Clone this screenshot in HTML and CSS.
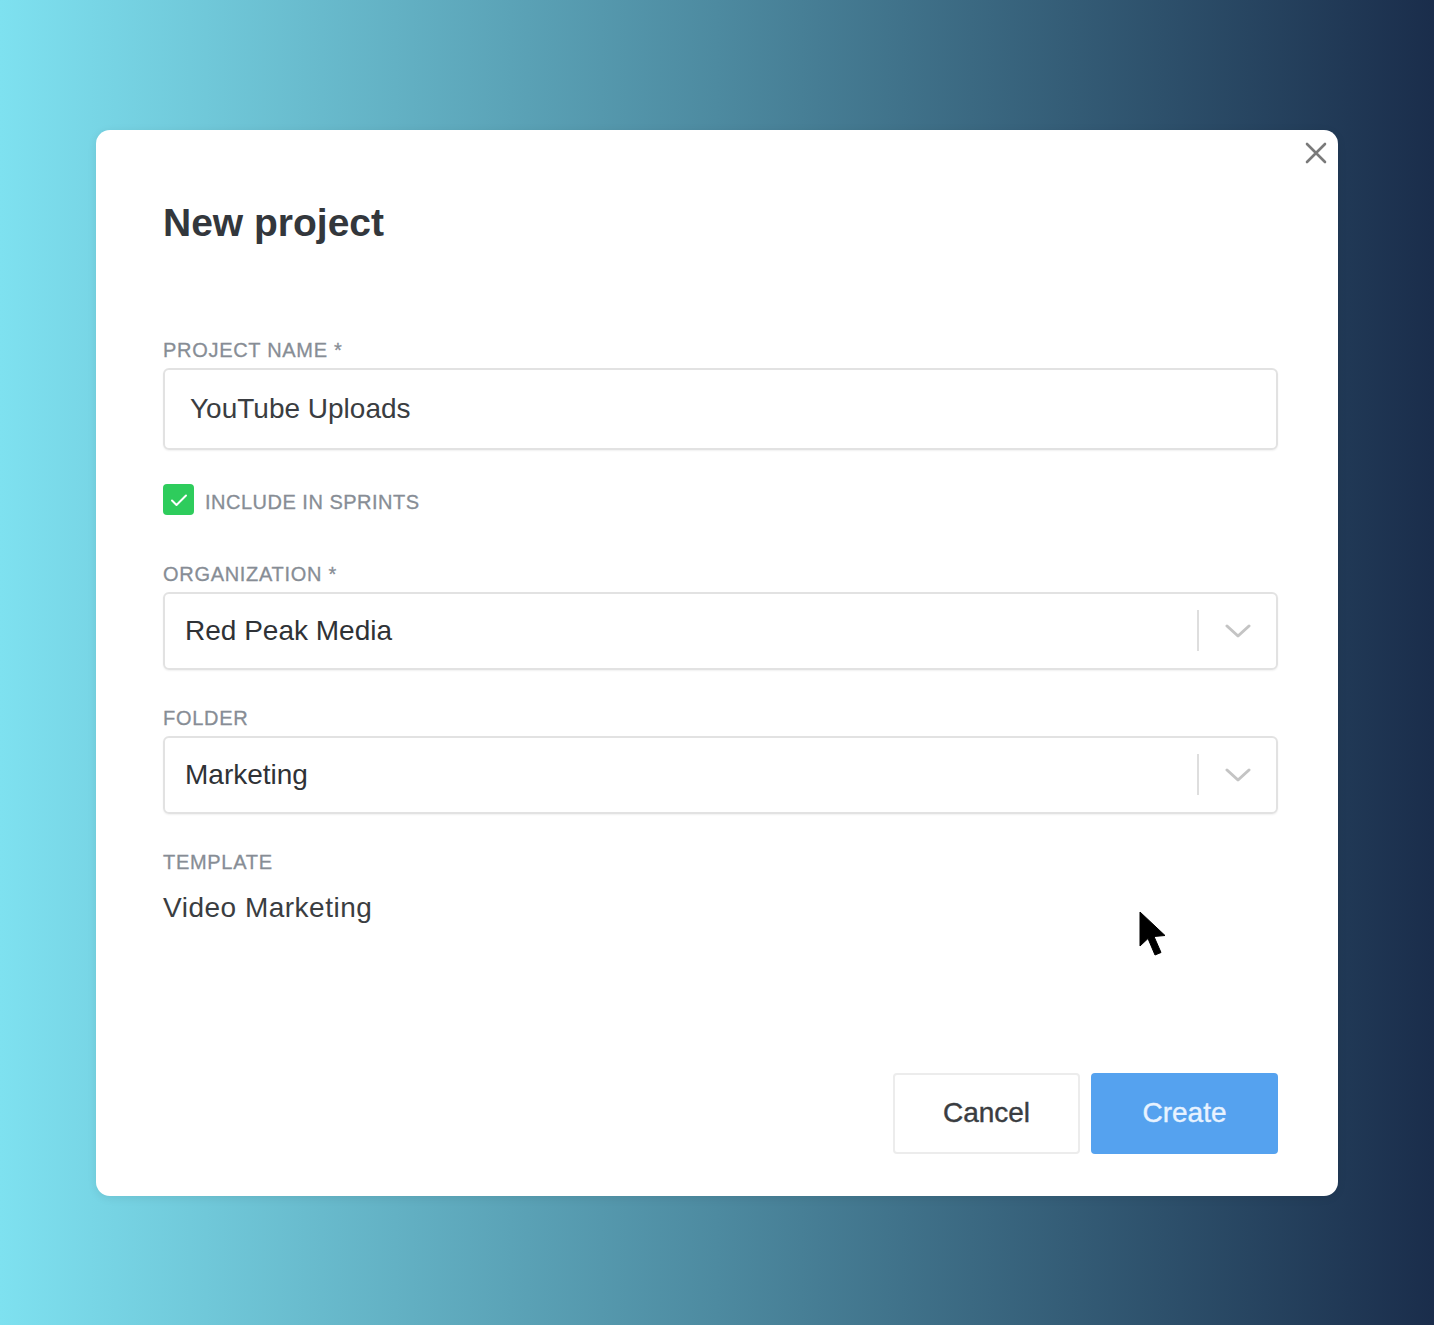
FILE: index.html
```html
<!DOCTYPE html>
<html lang="en">
<head>
<meta charset="utf-8">
<title>New project</title>
<link rel="stylesheet" href="styles.css">
</head>
<body>
<div class="modal">
  <button class="close" aria-label="Close">
    <svg width="22" height="22" viewBox="0 0 22 22"><path d="M2 2 L20 20 M20 2 L2 20" stroke="#7a7a7a" stroke-width="2.6" stroke-linecap="round" fill="none"/></svg>
  </button>
  <h1 class="title">New project</h1>

  <label class="label first">PROJECT NAME *</label>
  <div class="input">YouTube Uploads</div>

  <div class="check-row">
    <span class="checkbox">
      <svg width="18" height="14" viewBox="0 0 18 14"><path d="M2 7.5 L6.5 12 L16 2.5" stroke="#fff" stroke-width="2" fill="none" stroke-linecap="round" stroke-linejoin="round"/></svg>
    </span>
    <span class="check-label">INCLUDE IN SPRINTS</span>
  </div>

  <label class="label org">ORGANIZATION *</label>
  <div class="select">
    <span class="select-value">Red Peak Media</span>
    <span class="sep"></span>
    <svg class="chev" width="26" height="14" viewBox="0 0 26 14"><path d="M2 2 L13 12 L24 2" stroke="#c4c4c4" stroke-width="3" fill="none" stroke-linecap="round" stroke-linejoin="round"/></svg>
  </div>

  <label class="label">FOLDER</label>
  <div class="select">
    <span class="select-value">Marketing</span>
    <span class="sep"></span>
    <svg class="chev" width="26" height="14" viewBox="0 0 26 14"><path d="M2 2 L13 12 L24 2" stroke="#c4c4c4" stroke-width="3" fill="none" stroke-linecap="round" stroke-linejoin="round"/></svg>
  </div>

  <label class="label">TEMPLATE</label>
  <div class="template">Video Marketing</div>

  <div class="footer">
    <button class="btn cancel">Cancel</button>
    <button class="btn create">Create</button>
  </div>

  <svg class="cursor" width="28" height="48" viewBox="0 0 28 48"><path d="M1 1 L1 35 L9 27.5 L16 44 L22 41.5 L15 25.5 L26 24.5 Z" fill="#000" stroke="#000" stroke-width="1" stroke-linejoin="round"/></svg>
</div>
</body>
</html>
```

FILE: styles.css
```css
html, body {
  margin: 0;
  padding: 0;
}
body {
  width: 1434px;
  height: 1325px;
  background: linear-gradient(to right, #7ee1f0 0%, #4d8aa0 50%, #1a2d4b 100%);
  display: flex;
  align-items: center;
  justify-content: center;
  font-family: "Liberation Sans", Arial, sans-serif;
}
.modal {
  position: relative;
  box-sizing: border-box;
  width: 1242px;
  height: 1066px;
  background: #fff;
  border-radius: 14px;
  padding: 69px 60px 42px 67px;
  display: flex;
  flex-direction: column;
  box-shadow: 0 2px 10px rgba(0,0,0,0.08);
}
.close {
  position: absolute;
  top: 12px;
  right: 11px;
  width: 22px;
  height: 22px;
  padding: 0;
  border: 0;
  background: none;
  display: block;
}
.close svg { display: block; }
.title {
  margin: 0;
  font-size: 39px;
  line-height: 48px;
  font-weight: 700;
  color: #33373c;
}
.label {
  display: block;
  font-size: 20px;
  line-height: 24px;
  color: #878d95;
  letter-spacing: 0.7px;
  -webkit-text-stroke: 0.3px #878d95;
  margin-top: 36px;
  margin-bottom: 6px;
}
.label.first { margin-top: 91px; }
.label.org { margin-top: 46px; }
.input {
  box-sizing: border-box;
  height: 82px;
  border: 2px solid #e2e2e2;
  border-radius: 6px;
  padding-left: 25px;
  display: flex;
  align-items: center;
  font-size: 28px;
  color: #3a3d41;
  box-shadow: 0 1px 2px rgba(0,0,0,0.06);
}
.check-row {
  display: flex;
  align-items: center;
  margin-top: 34px;
  height: 32px;
}
.checkbox {
  width: 31px;
  height: 31px;
  border-radius: 4px;
  background: #2ecc5c;
  display: flex;
  align-items: center;
  justify-content: center;
}
.check-label {
  margin-left: 11px;
  font-size: 20px;
  letter-spacing: 0.5px;
  color: #878d95;
  -webkit-text-stroke: 0.3px #878d95;
  padding-top: 5px;
}
.select {
  box-sizing: border-box;
  height: 78px;
  border: 2px solid #e2e2e2;
  border-radius: 6px;
  padding-left: 20px;
  display: flex;
  align-items: center;
  font-size: 28px;
  color: #2f3236;
  box-shadow: 0 1px 2px rgba(0,0,0,0.06);
}
.select-value { flex: 1; }
.sep {
  width: 2px;
  height: 41px;
  background: #dedede;
  margin-right: 26px;
}
.chev {
  margin-right: 25px;
  display: block;
}
.template {
  margin-top: 11px;
  font-size: 28px;
  line-height: 34px;
  letter-spacing: 0.5px;
  color: #3a3d41;
}
.footer {
  margin-top: auto;
  display: flex;
  justify-content: flex-end;
  gap: 11px;
}
.btn {
  font-family: "Liberation Sans", Arial, sans-serif;
  font-size: 28px;
  height: 81px;
  width: 187px;
  border-radius: 4px;
  padding: 0;
  -webkit-text-stroke: 0.4px currentColor;
}
.cancel {
  background: #fff;
  border: 2px solid #ececec;
  color: #3a3d41;
}
.create {
  background: #55a2ef;
  border: 0;
  color: #e8f3ff;
}
.cursor {
  position: absolute;
  left: 1043px;
  top: 781px;
}
```
